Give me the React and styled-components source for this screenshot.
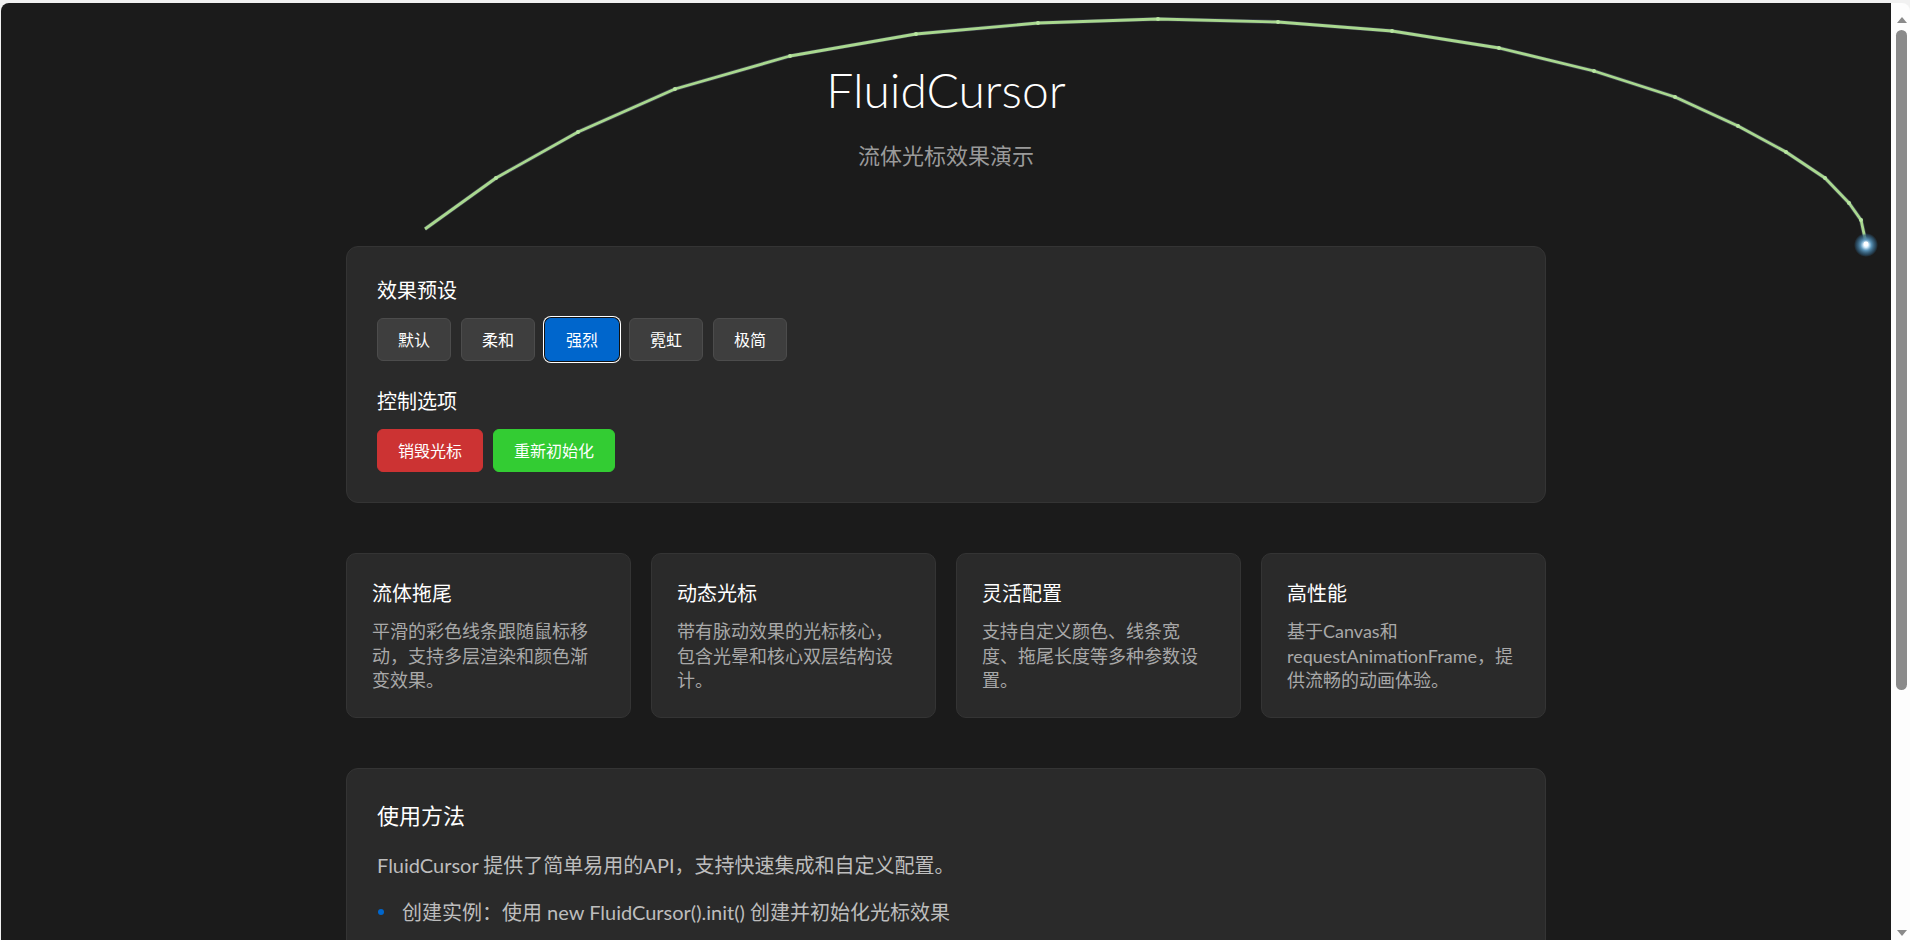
import styled, {createGlobalStyle} from 'styled-components';

const GlobalStyle = createGlobalStyle`
  html {
    background: #f1f1f1;
  }
  body {
    margin: 0;
    font-family: Lato, "Noto Sans CJK SC", sans-serif;
    color: #fff;
    overflow: hidden;
  }
  * {
    box-sizing: border-box;
  }
`;

const presets = ['默认', '柔和', '强烈', '霓虹', '极简'];

const features = [
  {
    title: '流体拖尾',
    text: '平滑的彩色线条跟随鼠标移动，支持多层渲染和颜色渐变效果。',
  },
  {
    title: '动态光标',
    text: '带有脉动效果的光标核心，包含光晕和核心双层结构设计。',
  },
  {
    title: '灵活配置',
    text: '支持自定义颜色、线条宽度、拖尾长度等多种参数设置。',
  },
  {
    title: '高性能',
    text: '基于Canvas和requestAnimationFrame，提供流畅的动画体验。',
  },
];

const usage = ['创建实例：使用 new FluidCursor().init() 创建并初始化光标效果'];

// cursor trail as it was captured on the canvas
const trail = [
  [425, 229], [496, 178], [578, 132], [675, 89], [790, 56], [916, 34],
  [1038, 23], [1158, 19], [1278, 22], [1392, 31], [1499, 48], [1594, 71],
  [1675, 97], [1738, 126], [1786, 152], [1825, 178], [1849, 203],
  [1861, 220], [1866, 243],
];

const Trail = () => {
  const d = trail.map(([x, y], i) => `${i ? 'L' : 'M'}${x} ${y}`).join(' ');
  return (
    <TrailLayer width="1900" height="300" viewBox="0 0 1900 300">
      <defs>
        <radialGradient id="glow">
          <stop offset="0" stopColor="#ffffff" />
          <stop offset="0.2" stopColor="#d8f0ff" />
          <stop offset="0.45" stopColor="#5b94b8" />
          <stop offset="0.8" stopColor="#2f5a78" stopOpacity="0.7" />
          <stop offset="1" stopColor="#2e5f80" stopOpacity="0" />
        </radialGradient>
      </defs>
      <path d={d} fill="none" stroke="#7d86a8" strokeWidth="4.2" strokeOpacity="0.35" strokeLinejoin="round" />
      <path d={d} fill="none" stroke="#a9d88f" strokeWidth="2.8" strokeLinejoin="round" />
      {trail.slice(1, -1).map(([x, y], i) => (
        <circle key={i} cx={x} cy={y} r="2" fill="#b8e6a0" />
      ))}
      <circle cx="1866" cy="245" r="12" fill="url(#glow)" />
      <circle cx="1866" cy="244" r="2.4" fill="#fff" />
    </TrailLayer>
  );
};

const ScrollArrow = ({down}) => (
  <svg width="10" height="6" viewBox="0 0 10 6">
    <path d={down ? 'M0 0 H10 L5 6 Z' : 'M0 6 H10 L5 0 Z'} fill="#8a8a8a" />
  </svg>
);

export default function App() {
  return (
    <>
      <GlobalStyle />
      <Frame>
        <Page>
          <Trail />
          <Container>
            <Header>
              <Title>FluidCursor</Title>
              <Subtitle>流体光标效果演示</Subtitle>
            </Header>

            <Panel>
              <Group gap={27}>
                <GroupTitle>效果预设</GroupTitle>
                <ButtonRow>
                  {presets.map(p => (
                    <Button key={p} variant={p === '强烈' ? 'active' : 'preset'}>
                      {p}
                    </Button>
                  ))}
                </ButtonRow>
              </Group>
              <Group>
                <GroupTitle>控制选项</GroupTitle>
                <ButtonRow>
                  <Button variant="danger">销毁光标</Button>
                  <Button variant="success">重新初始化</Button>
                </ButtonRow>
              </Group>
            </Panel>

            <FeatureGrid>
              {features.map(f => (
                <Card key={f.title}>
                  <CardTitle>{f.title}</CardTitle>
                  <CardText>{f.text}</CardText>
                </Card>
              ))}
            </FeatureGrid>

            <UsagePanel>
              <UsageTitle>使用方法</UsageTitle>
              <UsageText>
                FluidCursor 提供了简单易用的API，支持快速集成和自定义配置。
              </UsageText>
              <UsageList>
                {usage.map(u => (
                  <UsageItem key={u}>{u}</UsageItem>
                ))}
              </UsageList>
            </UsagePanel>
          </Container>
        </Page>
        <Scrollbar>
          <ScrollArrow />
          <Thumb />
          <ScrollArrow down />
        </Scrollbar>
      </Frame>
    </>
  );
}

const buttonColors = {
  preset: {bg: '#3e3e3e', border: '#4c4c4c'},
  active: {bg: '#0066cc', border: '#0066cc'},
  danger: {bg: '#cc3333', border: '#cc3333'},
  success: {bg: '#33cc33', border: '#33cc33'},
};

const Frame = styled.div`
  display: flex;
  height: 100vh;
  padding-top: 3px;
  overflow: hidden;
`;

const Page = styled.div`
  position: relative;
  flex: 1;
  margin-left: 1px;
  padding: 0 20px;
  background: #1b1b1b;
  border-top-left-radius: 8px;
  overflow: hidden;
`;

const Scrollbar = styled.div`
  width: 19px;
  display: flex;
  flex-direction: column;
  align-items: center;
  padding: 14px 0 4px 2px;
  gap: 7px;
  background: #fdfdfd;
  border-top-right-radius: 8px;
`;

const Thumb = styled.div`
  flex: 0 0 660px;
  width: 11px;
  border-radius: 6px;
  background: #8a8a8a;
  margin-bottom: auto;
`;

const TrailLayer = styled.svg`
  position: absolute;
  top: -3px;
  left: -1px;
  pointer-events: none;
  z-index: 5;
`;

const Container = styled.div`
  max-width: 1200px;
  margin: 0 auto;
`;

const Header = styled.header`
  text-align: center;
  padding-top: 58px;
  margin-bottom: 75px;
`;

const Title = styled.h1`
  margin: 0;
  font-family: Lato, "Noto Sans CJK SC", sans-serif;
  font-weight: 300;
  font-size: 48px;
  line-height: 58px;
  color: #fff;
`;

const Subtitle = styled.p`
  margin: 22px 0 0;
  font-size: 22px;
  line-height: 30px;
  color: #9a9a9a;
`;

const Panel = styled.section`
  background: #2a2a2a;
  border: 1px solid #343434;
  border-radius: 12px;
  padding: 30px;
  margin-bottom: 50px;
`;

const UsagePanel = styled(Panel)`
  padding-bottom: 60px;
`;

const Group = styled.div`
  margin-bottom: ${({gap}) => gap || 0}px;
`;

const GroupTitle = styled.h3`
  margin: 0 0 15px;
  font-size: 20px;
  line-height: 26px;
  font-weight: 400;
  color: #fff;
`;

const ButtonRow = styled.div`
  display: flex;
  gap: 10px;
`;

const Button = styled.button`
  padding: 10px 20px;
  font-family: Lato, "Noto Sans CJK SC", sans-serif;
  font-size: 16px;
  line-height: 21px;
  color: #fff;
  background: ${({variant}) => buttonColors[variant].bg};
  border: 1px solid ${({variant}) => buttonColors[variant].border};
  border-radius: 6px;
  cursor: pointer;
  box-shadow: ${({variant}) =>
    variant === 'active' ? '0 0 0 1px #101010, 0 0 0 2px #ffffff' : 'none'};
`;

const FeatureGrid = styled.div`
  display: grid;
  grid-template-columns: repeat(4, 1fr);
  gap: 20px;
  margin-bottom: 50px;
`;

const Card = styled.div`
  background: #2a2a2a;
  border: 1px solid #343434;
  border-radius: 10px;
  padding: 26px 25px 24px;
`;

const CardTitle = styled.h3`
  margin: 0 0 13px;
  font-size: 20px;
  line-height: 26px;
  font-weight: 400;
  color: #fff;
`;

const CardText = styled.p`
  margin: 0;
  font-size: 18px;
  line-height: 24.5px;
  color: #a8a8a8;
`;

const UsageTitle = styled.h2`
  margin: 0 0 18px;
  font-size: 22px;
  line-height: 34px;
  font-weight: 400;
  color: #fff;
`;

const UsageText = styled.p`
  margin: 0 0 19px;
  font-size: 20px;
  line-height: 28px;
  color: #bdbdbd;
`;

const UsageList = styled.ul`
  margin: 0;
  padding: 0;
  list-style: none;
`;

const UsageItem = styled.li`
  position: relative;
  padding-left: 25px;
  font-size: 20px;
  line-height: 28px;
  color: #bdbdbd;

  &::before {
    content: '';
    position: absolute;
    left: 1px;
    top: 11px;
    width: 6px;
    height: 6px;
    border-radius: 50%;
    background: #0066cc;
  }
`;
